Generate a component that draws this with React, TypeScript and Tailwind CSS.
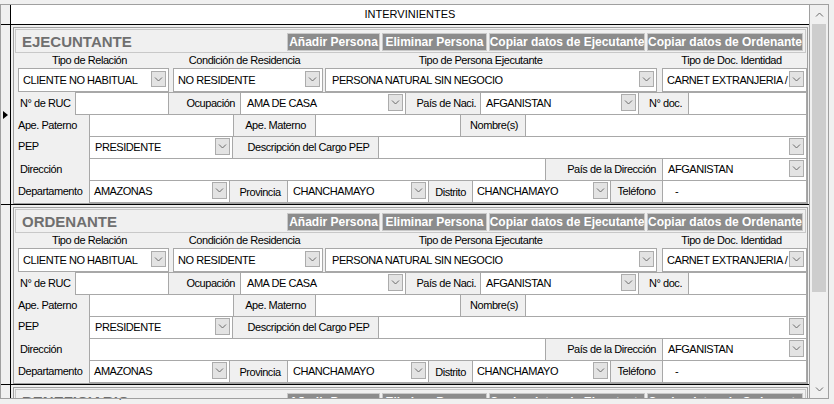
import React from "react";

const F = { fontFamily: '"Liberation Sans", Arial, Helvetica, sans-serif' };

function Chev({ up = false }: { up?: boolean }) {
  return (
    <svg width="9" height="5" viewBox="0 0 9 5" className={up ? "rotate-180" : ""}>
      <path d="M1 0.5 L4.5 4 L8 0.5" fill="none" stroke="#6b6b6b" strokeWidth="1" />
    </svg>
  );
}

function DropBtn({ cls }: { cls: string }) {
  return (
    <div className={`shrink-0 flex items-center justify-center bg-[#e3e3e3] border border-[#acacac] ${cls}`}>
      <Chev />
    </div>
  );
}

function Combo({
  w,
  text = "",
  m = "-ml-px",
  pl = "pl-[4px]",
  btn = "w-[15px] h-[17px] mt-[1px] mr-[2px]",
}: {
  w: string;
  text?: string;
  m?: string;
  pl?: string;
  btn?: string;
}) {
  return (
    <div className={`flex shrink-0 h-full bg-white border border-[#a8a8a8] ${m} ${w}`}>
      <div className={`flex-1 min-w-0 flex items-center ${pl} text-[11px] tracking-[-0.45px] whitespace-nowrap overflow-hidden text-black`}>
        {text}
      </div>
      <DropBtn cls={btn} />
    </div>
  );
}

function Txt({ w, text = "", m = "-ml-px", pl = "pl-[4px]" }: { w: string; text?: string; m?: string; pl?: string }) {
  return (
    <div className={`flex items-center shrink-0 h-full bg-white border border-[#a8a8a8] ${m} ${w} ${pl} text-[11px] tracking-[-0.45px] whitespace-nowrap text-black`}>
      {text}
    </div>
  );
}

function BLbl({ w, children, cls = "justify-center" }: { w: string; children: React.ReactNode; cls?: string }) {
  return (
    <div className={`flex items-center shrink-0 h-full bg-[#f0f0f0] border border-[#a8a8a8] -ml-px ${w} ${cls} text-[11px] tracking-[-0.45px] whitespace-nowrap text-black`}>
      {children}
    </div>
  );
}

function Lbl({ w, children, cls = "items-center" }: { w: string; children: React.ReactNode; cls?: string }) {
  return (
    <div className={`flex shrink-0 h-full ${w} ${cls} text-[11px] tracking-[-0.45px] whitespace-nowrap text-black`}>
      {children}
    </div>
  );
}

function HBtn({ w, children }: { w: string; children: React.ReactNode }) {
  return (
    <div className={`h-[18px] ${w} shrink-0 bg-[#8c8c8c] border border-[#c9c9c9] text-white font-bold text-[12px] flex items-center justify-center whitespace-nowrap`}>
      {children}
    </div>
  );
}

function Section({ title }: { title: string }) {
  return (
    <div className="ml-[2px] mt-[2px] w-[795px] h-[177px] border border-[#a0a0a0] bg-[#f0f0f0] flex flex-col">
      {/* title bar */}
      <div className="mx-[1px] mt-[1px] h-[24px] shrink-0 border border-[#c8c8c8] flex items-start justify-between">
        <div className="self-center pl-[6px] text-[15px] font-bold text-[#6f6f6f] leading-none">{title}</div>
        <div className="flex gap-[2px] pr-[2px] mt-[3px]">
          <HBtn w="w-[93px]">Añadir Persona</HBtn>
          <HBtn w="w-[105px]">Eliminar Persona</HBtn>
          <HBtn w="w-[156px]">Copiar datos de Ejecutante</HBtn>
          <HBtn w="w-[156px]">Copiar datos de Ordenante</HBtn>
        </div>
      </div>
      {/* labels row */}
      <div className="h-[15px] shrink-0 flex ml-[4px] text-[11px] tracking-[-0.45px] text-black leading-[15px] whitespace-nowrap">
        <div className="w-[151px] text-center pr-[8px]">Tipo de Relación</div>
        <div className="w-[150px] ml-[4px] text-center pr-[7px]">Condición de Residencia</div>
        <div className="w-[332px] ml-[2px] text-center pr-[21px]">Tipo de Persona Ejecutante</div>
        <div className="w-[145px] ml-[5px] text-center pr-[6px]">Tipo de Doc. Identidad</div>
      </div>
      {/* combos row */}
      <div className="h-[24px] shrink-0 flex ml-[4px]">
        <Combo w="w-[151px]" m="" text="CLIENTE NO HABITUAL" btn="w-[15px] h-[16px] mt-[2px] mr-[2px]" />
        <Combo w="w-[150px]" m="ml-[4px]" text="NO RESIDENTE" btn="w-[15px] h-[16px] mt-[2px] mr-[2px]" />
        <Combo w="w-[332px]" m="ml-[2px]" text="PERSONA NATURAL SIN NEGOCIO" pl="pl-[6px]" btn="w-[15px] h-[16px] mt-[2px] mr-[2px]" />
        <Combo w="w-[145px]" m="ml-[5px]" text="CARNET EXTRANJERIA / PASAPORTE" btn="w-[15px] h-[16px] mt-[2px] mr-[2px]" />
      </div>
      {/* row 2 */}
      <div className="h-[23px] shrink-0 flex">
        <Lbl w="w-[61px]" cls="items-center pl-[6px]">N° de RUC</Lbl>
        <Txt w="w-[94px]" m="" />
        <BLbl w="w-[73px]" cls="justify-end pr-[5px]">Ocupación</BLbl>
        <Combo w="w-[166px]" text="AMA DE CASA" pl="pl-[6px]" />
        <BLbl w="w-[76px]" cls="justify-end pr-[4px]">País de Naci.</BLbl>
        <Combo w="w-[159px]" text="AFGANISTAN" pl="pl-[5px]" />
        <BLbl w="w-[51px]" cls="justify-center pl-[4px]">N° doc.</BLbl>
        <Txt w="w-[119px]" />
      </div>
      {/* row 3 */}
      <div className="h-[23px] shrink-0 flex -mt-px">
        <Lbl w="w-[75px]" cls="items-center pl-[4px]">Ape. Paterno</Lbl>
        <Txt w="w-[145px]" m="" />
        <BLbl w="w-[83px]" cls="justify-center pl-[2px] pb-[1px]">Ape. Materno</BLbl>
        <Txt w="w-[146px]" />
        <BLbl w="w-[66px]" cls="justify-center pl-[2px]">Nombre(s)</BLbl>
        <Txt w="w-[282px]" />
      </div>
      {/* row 4 */}
      <div className="h-[23px] shrink-0 flex -mt-px">
        <Lbl w="w-[75px]" cls="items-start pt-[2px] pl-[4px]">PEP</Lbl>
        <Combo w="w-[144px]" m="" text="PRESIDENTE" pl="pl-[5px]" />
        <BLbl w="w-[147px]" cls="justify-center pl-[6px]">Descripción del Cargo PEP</BLbl>
        <Combo w="w-[429px]" />
      </div>
      {/* row 5 */}
      <div className="h-[23px] shrink-0 flex -mt-px">
        <Lbl w="w-[75px]" cls="items-center pl-[6px]">Dirección</Lbl>
        <Txt w="w-[457px]" m="" />
        <BLbl w="w-[118px]" cls="justify-end pr-[6px]">País de la Dirección</BLbl>
        <Combo w="w-[145px]" text="AFGANISTAN" pl="pl-[5px]" />
      </div>
      {/* row 6 */}
      <div className="h-[23px] shrink-0 flex -mt-px">
        <Lbl w="w-[75px]" cls="items-center pl-[4px]">Departamento</Lbl>
        <Combo w="w-[141px]" m="" text="AMAZONAS" />
        <BLbl w="w-[59px]" cls="justify-center pl-[3px] pt-[1px]">Provincia</BLbl>
        <Combo w="w-[142px]" text="CHANCHAMAYO" pl="pl-[5px]" />
        <BLbl w="w-[45px]" cls="justify-center pt-[1px]">Distrito</BLbl>
        <Combo w="w-[139px]" text="CHANCHAMAYO" />
        <BLbl w="w-[53px]" cls="justify-center">Teléfono</BLbl>
        <Txt w="w-[145px]" text="-" pl="pl-[12px]" />
      </div>
    </div>
  );
}

function GridRow({ title, current = false }: { title: string; current?: boolean }) {
  return (
    <div className="h-[180px] shrink-0 flex border-b border-black">
      <div className="w-[10px] shrink-0 border-r border-black bg-[#f0f0f0] flex items-center justify-center">
        {current && (
          <svg width="5" height="8" viewBox="0 0 5 8">
            <path d="M0 0 L5 4 L0 8 Z" fill="#000" />
          </svg>
        )}
      </div>
      <div className="w-[798px] shrink-0 bg-[#f0f0f0]">
        <Section title={title} />
      </div>
    </div>
  );
}

export default function App() {
  return (
    <div className="w-[834px] h-[404px] bg-[#f0f0f0] overflow-hidden flex flex-col" style={F}>
      <div className="h-[4px] shrink-0" />
      <div className="h-[395px] w-[829px] shrink-0 border border-[#a0a0a0] flex">
        <div className="w-[809px] shrink-0 flex flex-col overflow-hidden border-r border-[#a0a0a0]">
          <div className="h-[20px] shrink-0 flex border-b border-black">
            <div className="w-[10px] shrink-0 border-r border-black bg-[#f0f0f0]" />
            <div className="flex-1 bg-white flex items-center justify-center text-[11px] text-black">
              INTERVINIENTES
            </div>
          </div>
          <GridRow title="EJECUNTANTE" current />
          <GridRow title="ORDENANTE" />
          <GridRow title="BENEFICIARIO" />
        </div>
        <div className="w-[18px] shrink-0 flex flex-col bg-[#f0f0f0]">
          <div className="h-[18px] shrink-0 flex items-center justify-center">
            <Chev up />
          </div>
          <div className="mx-[2px] h-[268px] shrink-0 bg-[#cdcdcd] mt-[1px]" />
          <div className="flex-1" />
          <div className="h-[18px] shrink-0 flex items-center justify-center">
            <Chev />
          </div>
        </div>
      </div>
      <div className="h-[5px] shrink-0 overflow-hidden pl-[119px] text-[12px] leading-[10px] text-black">
        ´
      </div>
    </div>
  );
}
